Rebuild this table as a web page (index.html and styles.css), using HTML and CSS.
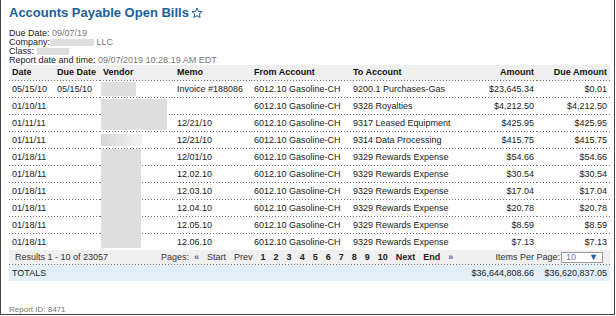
FILE: index.html
```html
<!DOCTYPE html>
<html>
<head>
<meta charset="utf-8">
<link rel="stylesheet" href="styles.css">
</head>
<body>
<div class="frame">
  <h1 class="title">Accounts Payable Open Bills
    <svg class="star" width="12" height="12" viewBox="0 0 24 24"><polygon points="12,2 14.9,8.6 22,9.3 16.6,14 18.2,21 12,17.3 5.8,21 7.4,14 2,9.3 9.1,8.6" fill="none" stroke="#1b5e9c" stroke-width="2" stroke-linejoin="round"/></svg>
  </h1>
  <div class="info">
    <div>Due Date: <span class="val">09/07/19</span></div>
    <div>Company:<span class="redact company"></span> <span class="val">LLC</span></div>
    <div>Class: <span class="redact cls"></span></div>
    <div>Report date and time: <span class="val">09/07/2019 10:28:19 AM EDT</span></div>
  </div>
  <table class="grid">
    <colgroup>
      <col style="width:45px"><col style="width:46px"><col style="width:74px"><col style="width:77px">
      <col style="width:99px"><col style="width:117px"><col style="width:70px"><col style="width:73px">
    </colgroup>
    <thead>
      <tr><th>Date</th><th>Due Date</th><th>Vendor</th><th>Memo</th><th>From Account</th><th>To Account</th><th class="num">Amount</th><th class="num">Due Amount</th></tr>
    </thead>
    <tbody>
      <tr><td>05/15/10</td><td>05/15/10</td><td class="vendor"><span class="redact v1"></span></td><td>Invoice #188086</td><td>6012.10 Gasoline-CH</td><td>9200.1 Purchases-Gas</td><td class="num">$23,645.34</td><td class="num">$0.01</td></tr>
      <tr><td>01/10/11</td><td></td><td class="vendor"><span class="redact v2"></span></td><td></td><td>6012.10 Gasoline-CH</td><td>9328 Royalties</td><td class="num">$4,212.50</td><td class="num">$4,212.50</td></tr>
      <tr><td>01/11/11</td><td></td><td></td><td>12/21/10</td><td>6012.10 Gasoline-CH</td><td>9317 Leased Equipment</td><td class="num">$425.95</td><td class="num">$425.95</td></tr>
      <tr><td>01/11/11</td><td></td><td class="vendor"><span class="redact v3"></span></td><td>12/21/10</td><td>6012.10 Gasoline-CH</td><td>9314 Data Processing</td><td class="num">$415.75</td><td class="num">$415.75</td></tr>
      <tr><td>01/18/11</td><td></td><td class="vendor"><span class="redact v4"></span></td><td>12/01/10</td><td>6012.10 Gasoline-CH</td><td>9329 Rewards Expense</td><td class="num">$54.66</td><td class="num">$54.66</td></tr>
      <tr><td>01/18/11</td><td></td><td></td><td>12.02.10</td><td>6012.10 Gasoline-CH</td><td>9329 Rewards Expense</td><td class="num">$30.54</td><td class="num">$30.54</td></tr>
      <tr><td>01/18/11</td><td></td><td></td><td>12.03.10</td><td>6012.10 Gasoline-CH</td><td>9329 Rewards Expense</td><td class="num">$17.04</td><td class="num">$17.04</td></tr>
      <tr><td>01/18/11</td><td></td><td></td><td>12.04.10</td><td>6012.10 Gasoline-CH</td><td>9329 Rewards Expense</td><td class="num">$20.78</td><td class="num">$20.78</td></tr>
      <tr><td>01/18/11</td><td></td><td></td><td>12.05.10</td><td>6012.10 Gasoline-CH</td><td>9329 Rewards Expense</td><td class="num">$8.59</td><td class="num">$8.59</td></tr>
      <tr class="last"><td>01/18/11</td><td></td><td></td><td>12.06.10</td><td>6012.10 Gasoline-CH</td><td>9329 Rewards Expense</td><td class="num">$7.13</td><td class="num">$7.13</td></tr>
    </tbody>
    <tfoot>
      <tr class="pager-row"><td colspan="8">
        <div class="pager">
          <span class="results">Results 1 - 10 of 23057</span>
          <span class="pages">
            <span class="plabel">Pages:</span>
            <span class="arrow">«</span>
            <span>Start</span>
            <span>Prev</span>
            <b>1</b><b>2</b><b>3</b><b>4</b><b>5</b><b>6</b><b>7</b><b>8</b><b>9</b><b>10</b>
            <b>Next</b>
            <b>End</b>
            <span class="arrow">»</span>
          </span>
          <span class="ipp">Items Per Page:
            <span class="select"><span class="sel-val">10</span><span class="sel-arrow">▼</span></span>
          </span>
        </div>
      </td></tr>
      <tr class="totals"><td colspan="6">TOTALS</td><td class="num">$36,644,808.66</td><td class="num">$36,620,837.05</td></tr>
    </tfoot>
  </table>
  <div class="report-id">Report ID: 8471</div>
</div>
</body>
</html>
```
FILE: styles.css
```css
html, body {
  margin: 0;
  padding: 0;
  background: #fff;
}
body {
  font-family: "Liberation Sans", Arial, sans-serif;
  color: #222;
}
.frame {
  width: 615px;
  height: 315px;
  box-sizing: border-box;
  border: 1px solid #444;
  border-top: 0;
  padding: 0 4px 0 8px;
  display: flex;
  flex-direction: column;
}
.title {
  margin: 5px 0 0;
  font-size: 13px;
  line-height: 16px;
  font-weight: bold;
  color: #1b5e9c;
  display: flex;
  align-items: center;
  gap: 2px;
}
.star {
  display: block;
  margin-top: -1px;
}
.info {
  margin-top: 8px;
  font-size: 9px;
  line-height: 9px;
  color: #222;
}
.val {
  color: #777;
}
.redact {
  display: inline-block;
  background: #dedede;
  vertical-align: top;
}
.company {
  width: 44px;
  height: 7px;
  margin-top: 1px;
}
.cls {
  width: 32px;
  height: 7px;
  margin-top: 1px;
}
.grid {
  width: 601px;
  table-layout: fixed;
  border-collapse: collapse;
  border-spacing: 0;
  font-size: 9px;
}
.grid th, .grid td {
  padding: 0 3px 1px;
  text-align: left;
  white-space: nowrap;
  overflow: visible;
  background-image: linear-gradient(to right, #777 1px, transparent 1px);
  background-size: 3px 1px;
  background-repeat: repeat-x;
  background-position: left bottom;
}
.grid th {
  line-height: 15px;
  font-weight: bold;
  color: #111;
  background-color: #f0f0f0;
}
.grid td {
  line-height: 16px;
}
.grid .num {
  text-align: right;
}
.grid tr.last td {
  padding-bottom: 0;
  background-image: none;
}
.vendor {
  position: relative;
}
.vendor .redact {
  position: absolute;
  left: 1px;
}
.v1 { top: 1px; width: 35px; height: 14px; }
.v2 { top: 1px; width: 66px; height: 31px; }
.v3 { top: 2px; width: 41px; height: 12px; background: linear-gradient(to right, #d6d6d6, #f4f4f4); }
.v4 { top: 0; width: 40px; height: 99px; }
.pager-row td {
  padding: 0 0 1px;
  background-color: #f0f0f0;
}
.pager {
  display: flex;
  align-items: center;
  height: 14px;
  color: #333;
}
.results {
  flex: 0 0 152px;
  padding-left: 6px;
  box-sizing: border-box;
}
.pages {
  display: flex;
  align-items: center;
  gap: 8px;
}
.pages b {
  color: #222;
}
.plabel {
  margin-right: -3px;
}
.arrow {
  color: #4a6d96;
  font-size: 9px;
  font-weight: bold;
}
.ipp {
  margin-left: auto;
  margin-right: 7px;
  display: flex;
  align-items: center;
  gap: 1px;
}
.select {
  display: flex;
  align-items: center;
  justify-content: space-between;
  width: 42px;
  height: 11px;
  box-sizing: border-box;
  border: 1px solid #999;
  background: #fff;
  padding: 0 4px 0 4px;
  line-height: 9px;
}
.sel-val {
  color: #5b7fa8;
}
.sel-arrow {
  color: #1b5e9c;
  font-size: 9px;
}
.totals td {
  background-color: #e3f0fa;
  background-image: none;
  padding-bottom: 0;
}
.report-id {
  margin-top: auto;
  font-size: 8px;
  line-height: 9px;
  color: #777;
}
```
